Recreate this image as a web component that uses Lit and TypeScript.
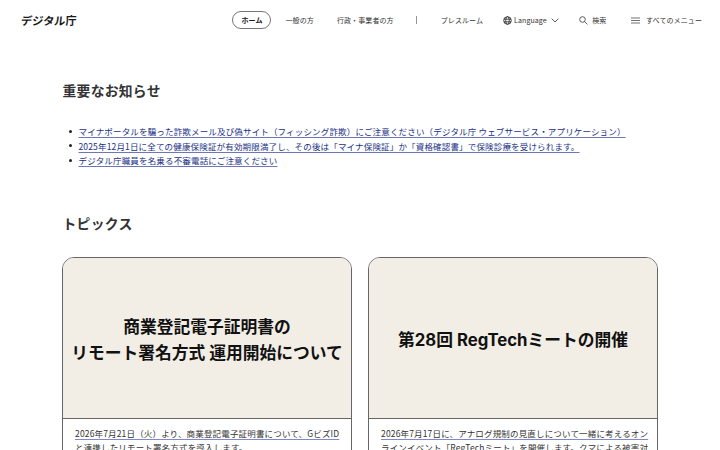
import { LitElement, html, css } from 'lit';
import { customElement, property } from 'lit/decorators.js';

@customElement('site-header')
export class SiteHeader extends LitElement {
  static styles = css`
    :host {
      display: flex;
      align-items: center;
      box-sizing: border-box;
      height: 40px;
      padding: 0 18px 0 21px;
      white-space: nowrap;
      color: #333;
    }

    .logo {
      display: flex;
      font-size: 11.2px;
      font-weight: 700;
      line-height: 16px;
      color: #1a1a1a;
    }

    .kana {
      transform: skewX(-6deg);
    }

    nav {
      display: flex;
      align-items: center;
      margin-left: auto;
      font-size: 7px;
      letter-spacing: 0.1px;
      line-height: 12px;
    }

    .home {
      box-sizing: border-box;
      width: 39px;
      height: 18px;
      border: 1px solid #767676;
      border-radius: 9px;
      line-height: 16px;
      text-align: center;
      font-weight: 700;
      color: #1a1a1a;
      margin-right: 14px;
    }

    .general {
      margin-right: 23px;
    }

    .divider {
      width: 1px;
      height: 8px;
      background: #949494;
      margin: 0 23.5px 0 22.5px;
    }

    .item {
      display: flex;
      align-items: center;
    }

    .language {
      margin: 0 20.5px 0 19.5px;
    }

    .search {
      margin-right: 24.5px;
    }

    svg {
      display: block;
      fill: none;
      stroke: #333;
    }

    .globe {
      margin-right: 2.5px;
    }

    .chevron {
      margin-left: 4px;
    }

    .glass {
      margin-right: 4px;
    }

    .burger {
      margin-right: 6px;
    }
  `;

  render() {
    return html`
      <div class="logo"><span class="kana">デジタル</span><span>庁</span></div>
      <nav>
        <span class="home">ホーム</span>
        <span class="general">一般の方</span>
        <span>行政・事業者の方</span>
        <span class="divider"></span>
        <span>プレスルーム</span>
        <span class="item language">
          <svg class="globe" width="9" height="9" viewBox="0 0 9 9" stroke-width="0.9">
            <circle cx="4.5" cy="4.5" r="3.8" />
            <ellipse cx="4.5" cy="4.5" rx="1.8" ry="3.8" />
            <path d="M.9 3.2h7.2M.9 5.8h7.2" />
          </svg>
          Language
          <svg class="chevron" width="8" height="5" viewBox="0 0 8 5" stroke-width="0.8">
            <path d="M.7 .7L4 4L7.3 .7" />
          </svg>
        </span>
        <span class="item search">
          <svg class="glass" width="9" height="9" viewBox="0 0 9 9" stroke-width="0.8">
            <circle cx="3.5" cy="3.5" r="2.8" />
            <path d="M5.6 5.6L8.4 8.4" />
          </svg>
          検索
        </span>
        <span class="item">
          <svg class="burger" width="9" height="7" viewBox="0 0 9 7" stroke-width="0.7">
            <path d="M0 1h9M0 3.5h9M0 6h9" />
          </svg>
          すべてのメニュー
        </span>
      </nav>
    `;
  }
}

@customElement('topic-card')
export class TopicCard extends LitElement {
  static styles = css`
    :host {
      display: block;
      box-sizing: border-box;
      height: 230px;
      border: 1px solid #666;
      border-radius: 12px;
      overflow: hidden;
      color: #333;
    }

    .image {
      display: flex;
      flex-direction: column;
      align-items: center;
      justify-content: center;
      box-sizing: border-box;
      height: 161px;
      padding-top: 5px;
      background: #f2eee6;
      border-bottom: 1px solid #666;
      font-family: Inter, "Noto Sans CJK JP", sans-serif;
      font-size: 16.75px;
      font-weight: 700;
      line-height: 26px;
      white-space: nowrap;
      color: #111;
    }

    .text {
      padding: 7px 8px 0 12px;
      font-size: 8.53px;
      letter-spacing: 0.15px;
      line-height: 14.5px;
      white-space: nowrap;
    }

    .text span {
      text-decoration: underline #7d8ac4 1px;
      text-underline-offset: 1.6px;
      text-decoration-skip-ink: none;
    }
  `;

  @property({ attribute: false })
  heading: string[] = [];

  @property({ attribute: false })
  lines: string[] = [];

  render() {
    return html`
      <div class="image">${this.heading.map((line) => html`<div>${line}</div>`)}</div>
      <div class="text">${this.lines.map((line) => html`<div><span>${line}</span></div>`)}</div>
    `;
  }
}

@customElement('app-root')
export class AppRoot extends LitElement {
  static styles = css`
    :host {
      display: block;
      height: 450px;
      overflow: hidden;
      background: #fff;
      color: #333;
      font-family: "Noto Sans CJK JP", sans-serif;
    }

    main {
      padding: 40px 62px 0;
    }

    h2 {
      margin: 0;
      padding-left: 0.5px;
      font-size: 13.8px;
      font-weight: 700;
      letter-spacing: 0.02em;
      line-height: 20px;
    }

    ul {
      margin: 24px 0 45.5px;
      padding: 0;
      list-style: none;
      font-size: 8.53px;
      letter-spacing: 0.15px;
      line-height: 14.5px;
      white-space: nowrap;
    }

    li {
      display: flex;
      align-items: center;
      padding-left: 6.5px;
    }

    li::before {
      content: "";
      width: 3.4px;
      height: 3.4px;
      margin-right: 6.6px;
      border-radius: 50%;
      background: #222;
    }

    a {
      color: #1a3185;
      text-decoration: underline #6b78b5 1px;
      text-underline-offset: 1.6px;
      text-decoration-skip-ink: none;
    }

    .cards {
      display: grid;
      grid-template-columns: 290px 290px;
      gap: 16px;
      margin-top: 23.5px;
    }
  `;

  news = [
    'マイナポータルを騙った詐欺メール及び偽サイト（フィッシング詐欺）にご注意ください（デジタル庁 ウェブサービス・アプリケーション）',
    '2025年12月1日に全ての健康保険証が有効期限満了し、その後は「マイナ保険証」か「資格確認書」で保険診療を受けられます。',
    'デジタル庁職員を名乗る不審電話にご注意ください',
  ];

  topics = [
    {
      heading: ['商業登記電子証明書の', 'リモート署名方式 運用開始について'],
      lines: ['2026年7月21日（火）より、商業登記電子証明書について、GビズID', 'と連携したリモート署名方式を導入します。'],
    },
    {
      heading: ['第28回 RegTechミートの開催'],
      lines: ['2026年7月17日に、アナログ規制の見直しについて一緒に考えるオン', 'ラインイベント「RegTechミート」を開催します。クマによる被害対'],
    },
  ];

  render() {
    return html`
      <site-header></site-header>
      <main>
        <h2>重要なお知らせ</h2>
        <ul>
          ${this.news.map((item) => html`<li><a href="#">${item}</a></li>`)}
        </ul>
        <h2>トピックス</h2>
        <div class="cards">
          ${this.topics.map((t) => html`<topic-card .heading=${t.heading} .lines=${t.lines}></topic-card>`)}
        </div>
      </main>
    `;
  }
}
